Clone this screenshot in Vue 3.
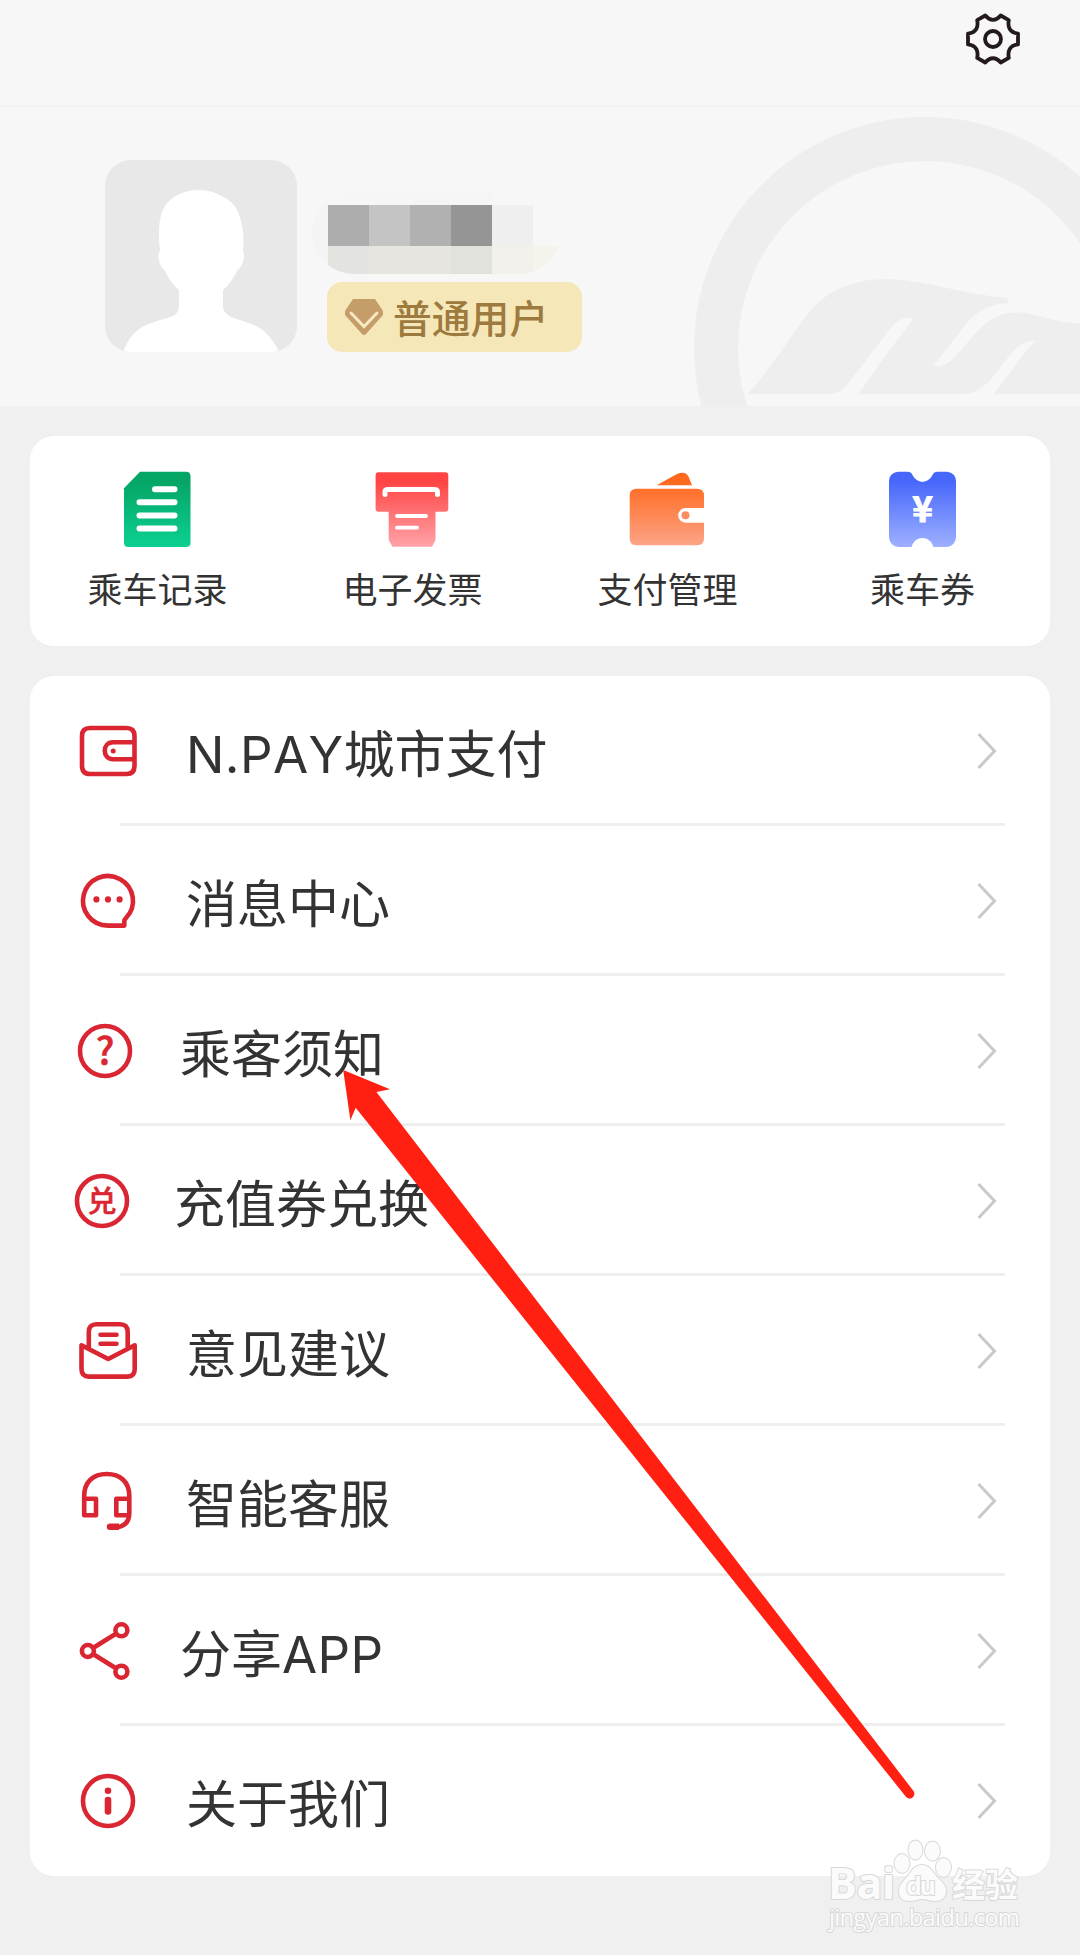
<template>
  <div class="page">
    <header class="topbar">
      <svg class="gear" viewBox="0 0 60 60">
        <path
          d="M22.3 6.5L14.2 11.2C15.5 18 13.5 23.5 5 24.6V35.4C13.5 36.5 15.5 42 14.2 48.8L22.3 53.5C27 47.8 33 47.8 37.7 53.5L45.8 48.8C44.5 42 46.5 36.5 55 35.4V24.6C46.5 23.5 44.5 18 45.8 11.2L37.7 6.5C33 12.2 27 12.2 22.3 6.5Z"
        />
        <circle cx="30" cy="30" r="8" />
      </svg>
    </header>

    <section class="profile">
      <svg class="emblem" viewBox="0 318 1440 900">
        <circle cx="975" cy="1044" r="627" />
        <path
          d="M445 1180C510 1110 570 1010 625 940C680 870 760 835 870 837C980 842 1080 880 1225 895V910C1165 912 1130 935 1100 970L1000 1098C1030 1105 1050 1085 1070 1065C1130 1000 1160 940 1250 937C1310 938 1350 968 1440 970V1183H1180L1240 1105C1265 1070 1285 1040 1310 1023C1270 1020 1250 1040 1230 1065C1190 1110 1160 1183 1080 1183H775L850 1075L940 957C900 945 880 975 860 1000L760 1130C735 1165 720 1183 670 1183H445Z"
        />
      </svg>
      <svg class="avatar" viewBox="0 0 192 192">
        <path
          d="M18 192C23 180 28 172 39 166C50 161 60 159 68 156C72 154 74 150 74 146V130C68 125 63 118 60 111C56 108 52 99 54 93L55 90C53 75 54 60 57 52C63 37 77 30 96 30C106 30 117 35 126 42C136 51 140 72 138 90C141 98 137 107 132 111C128 119 123 126 118 130V146C118 151 121 154 126 157C136 161 148 163 156 169C164 175 170 183 174 192Z"
        />
      </svg>
      <div class="user">
        <div class="mosaic">
          <i v-for="(color, i) in mosaic" :key="i" :style="{ background: color }"></i>
        </div>
        <div class="level">
          <svg class="gem" viewBox="0 0 40 38">
            <path d="M9 1H31L39 13V17L22 36Q20 38 18 36L1 17V13Z" fill="#c49d69" />
            <path
              d="M7 15L20 28.500L33 15"
              fill="none"
              stroke="#f8e9c2"
              stroke-width="3"
              stroke-linecap="round"
            />
          </svg>
          <span>普通用户</span>
        </div>
      </div>
    </section>

    <nav class="shortcuts">
      <a v-for="item in shortcuts" :key="item.name">
        <svg viewBox="0 0 80 80">
          <defs>
            <linearGradient :id="item.name" x1="0" y1="0" x2="0" y2="80" gradientUnits="userSpaceOnUse">
              <stop offset="0.15" :stop-color="item.from" />
              <stop offset="0.95" :stop-color="item.to" />
            </linearGradient>
          </defs>
          <g :fill="`url(#${item.name})`">
            <path :d="item.shape" />
          </g>
          <g v-if="item.name === 'record'" class="lines" stroke-width="6">
            <path d="M38 20.300H57.500M22.500 33.300H57.500M22.500 46.500H57.500M22.500 59.600H57.500" />
          </g>
          <g v-if="item.name === 'invoice'" class="lines" stroke-width="3.8">
            <path d="M13 25.500V23Q13 20.500 16 20.500H62Q65.500 20.500 65.500 23V25.500" stroke-width="5" />
            <path d="M25 47H54M25 58.700H45" />
          </g>
          <circle v-if="item.name === 'wallet'" cx="58.500" cy="46.300" r="4" fill="#fd8c60" />
          <text v-if="item.name === 'coupon'" class="yen" x="40.500" y="53">¥</text>
        </svg>
        <span>{{ item.label }}</span>
      </a>
    </nav>

    <ul class="menu">
      <li v-for="item in menu" :key="item.label">
        <div class="row">
          <svg class="icon" viewBox="0 0 60 60">
            <circle v-if="item.ring" :cx="item.ring" cy="30" r="25" />
            <path v-if="item.path" :d="item.path" />
            <circle
              v-for="(dot, i) in item.dots"
              :key="i"
              class="solid"
              :cx="dot[0]"
              :cy="dot[1]"
              :r="dot[2]"
            />
            <path v-if="item.solid" class="solid" :d="item.solid" />
            <text v-if="item.char" :x="item.ring" :y="item.charY" :font-size="item.charSize">
              {{ item.char }}
            </text>
          </svg>
          <span class="label" :class="item.shift">
            <b v-if="item.before">{{ item.before }}</b>{{ item.label }}<b v-if="item.after">{{ item.after }}</b>
          </span>
          <svg class="arrow" viewBox="0 0 22 40">
            <path d="M2.500 3L18.500 20L2.500 37" />
          </svg>
        </div>
      </li>
    </ul>

    <svg class="overlay" viewBox="0 0 1080 1955">
      <path
        fill="#ff2012"
        d="M343.200 1070L390 1089.300L376.400 1092L913.500 1791A4.500 4.500 0 0 1 905.700 1796.500L355.700 1107.700L350.400 1120.300Z"
      />
      <g class="watermark">
        <text x="828" y="1899" font-size="43" font-weight="700" textLength="67">Bai</text>
        <ellipse cx="902" cy="1863.500" rx="7.500" ry="9.500" />
        <ellipse cx="915.500" cy="1850" rx="7" ry="9.500" />
        <ellipse cx="932.500" cy="1851" rx="7.500" ry="9.500" />
        <ellipse cx="943.500" cy="1867.500" rx="7.500" ry="9.500" />
        <path
          d="M922 1865C930 1865 933 1872 937 1877C942 1882 946 1885 946 1891C946 1898 941 1901 935 1901C930 1901 927 1899 922 1899C917 1899 915 1901 910 1901C903 1901 899 1898 899 1891C899 1885 903 1882 907 1877C911 1872 914 1865 922 1865Z"
        />
        <text x="906" y="1895" font-size="25" font-weight="700" textLength="30">du</text>
        <text x="952" y="1897" font-size="33" font-weight="700" textLength="66">经验</text>
        <text x="829" y="1926" font-size="24" textLength="191">jingyan.baidu.com</text>
      </g>
    </svg>
  </div>
</template>

<script setup>
const mosaic = [
  "#f5f5f5", "#f6f6f6", "#f6f6f6", "#f5f5f5", "#f5f5f5", "#f7f7f7", "#f7f7f7",
  "#f4f4f4", "#adadad", "#c4c4c4", "#b1b1b1", "#959595", "#efefef", "#f7f7f7",
  "#f4f4f4", "#e3e3df", "#e6e5e0", "#e6e5e0", "#e2e2dd", "#f1f0ea", "#f4f3ec",
];

const shortcuts = [
  {
    name: "record",
    label: "乘车记录",
    from: "#05a565",
    to: "#0bcf90",
    shape: "M23 2.700H69Q73.500 2.700 73.500 7V73.500Q73.500 78 69 78H11.500Q7 78 7 73.500V19.300Z",
  },
  {
    name: "invoice",
    label: "电子发票",
    from: "#ff4443",
    to: "#ffa1a6",
    shape:
      "M6.500 3.300H73.300Q76.300 3.300 76.300 6.500V39.500Q76.300 42.700 73.300 42.700H63.500V71L60 77.700H20.500L16.700 71V42.700H6.500Q3.600 42.700 3.600 39.500V6.500Q3.600 3.300 6.500 3.300Z",
  },
  {
    name: "wallet",
    label: "支付管理",
    from: "#ff681d",
    to: "#fda386",
    shape:
      "M29.600 16.300L50 5Q58.500 1.500 61.500 7.500L65 16.300ZM9.500 19.700H70Q77 19.700 77 26.500V39H58.500A7.350 7.350 0 0 0 58.500 53.700H77V69.500Q77 76.300 70 76.300H9.500Q2.700 76.300 2.700 69.500V26.500Q2.700 19.700 9.500 19.700Z",
  },
  {
    name: "coupon",
    label: "乘车券",
    from: "#4767fb",
    to: "#9baeff",
    shape:
      "M16 2.700H25.500Q29 2.700 30.500 6C35 15 46 15 50.500 6Q52 2.700 55.500 2.700H65Q74 4 74 12.500V68.500Q73 77 65 78H51.500C48 66 33 66 29.500 78H16Q8 77 7 68.500V12.500Q7 4 16 2.700Z",
  },
];

const menu = [
  {
    before: "N.PAY",
    label: "城市支付",
    path: "M12 7H48.500Q56.500 7 56.500 15V45Q56.500 53 48.500 53H12Q4 53 4 45V15Q4 7 12 7ZM56.500 21.300H35C24 21.300 24 38.200 35 38.200H56.500",
    dots: [[35.2, 30, 2.5]],
  },
  {
    label: "消息中心",
    path: "M30 54.600H46.300V50.500Q46.300 48.500 48 47A25 24.800 0 1 0 30 54.600Z",
    dots: [[18.4, 28.4, 3.1], [30, 28.4, 3.1], [41.6, 28.4, 3.1]],
  },
  { label: "乘客须知", shift: "near", ring: 27, char: "?", charY: 44, charSize: 38 },
  { label: "充值券兑换", shift: "nearer", ring: 24, char: "兑", charY: 41, charSize: 29 },
  {
    label: "意见建议",
    path: "M10.800 26V11Q10.800 3.300 18.500 3.300H42Q49.700 3.300 49.700 11V26M3.500 24.300V48Q3.500 55.600 11 55.600H49.500Q56.700 55.600 56.700 48V24.300L30.200 38ZM22.500 13.700H38.500M22.500 22.700H38.500",
  },
  {
    label: "智能客服",
    path: "M6.200 44.300V25C6.200 11 15 3 28.700 3S51.300 11 51.300 25V42C51.300 51 46 55.500 38 56.500M6.200 27.700H18V44.300H6.200ZM51.300 27.700H38.300V44.300H51.300",
    solid: "M32 52.500H41V59H32A3.200 3.200 0 0 1 32 52.500Z",
  },
  {
    label: "分享",
    after: "APP",
    shift: "near",
    path: "M3.900 30a6 6 0 1 0 12 0a6 6 0 1 0-12 0M37.400 9.300a6 6 0 1 0 12 0a6 6 0 1 0-12 0M37.400 50.700a6 6 0 1 0 12 0a6 6 0 1 0-12 0M15 27L38.300 12.500M15 33L38.300 47.500",
  },
  {
    label: "关于我们",
    ring: 30,
    dots: [[30, 19.7, 3.3]],
    solid: "M26.700 29A3.300 3.300 0 0 1 33.300 29V40.500A3.300 3.300 0 0 1 26.700 40.500Z",
  },
];
</script>

<style>
body {
  margin: 0;
  background: #f0f0f0;
}
</style>

<style scoped>
.page {
  position: relative;
  width: 1080px;
  height: 1955px;
  overflow: hidden;
  background: #f0f0f0;
  color: #333;
  font-family: "Noto Sans CJK SC", sans-serif;
}
svg {
  display: block;
  flex: none;
}
.topbar {
  display: flex;
  justify-content: flex-end;
  box-sizing: border-box;
  height: 107px;
  padding: 9px 57px 0 0;
  background: #f7f7f7;
  border-bottom: 2px solid #f3f3f3;
}
.gear {
  width: 60px;
  height: 60px;
  fill: none;
  stroke: #231a1e;
  stroke-width: 3.8;
  stroke-linejoin: round;
}
.profile {
  position: relative;
  display: flex;
  box-sizing: border-box;
  height: 299px;
  padding: 53px 0 0 105px;
  background: #f7f7f7;
}
.emblem {
  position: absolute;
  right: 0;
  bottom: 0;
  width: 480px;
  height: 300px;
  fill: #eee;
}
.emblem circle {
  fill: none;
  stroke: #eee;
  stroke-width: 132;
}
.avatar {
  width: 192px;
  height: 192px;
  border-radius: 26px;
  background: #e8e8e8;
  fill: #fff;
}
.user {
  position: relative;
  display: flex;
  flex-direction: column;
  gap: 8px;
  margin: 31px 0 0 15px;
}
.mosaic {
  display: grid;
  grid-template: 14px 41px 28px / 16px repeat(5, 41px) 28px;
  width: 249px;
  border-radius: 42px;
  overflow: hidden;
}
.level {
  display: flex;
  align-items: center;
  gap: 9px;
  box-sizing: border-box;
  width: 255px;
  height: 70px;
  margin-left: 15px;
  padding-left: 17px;
  border-radius: 15px;
  background: #f6e7b9;
  color: #9d7a3e;
  font-size: 38.8px;
  font-weight: 500;
  line-height: 68px;
}
.level span {
  height: 70px;
}
.gem {
  width: 40px;
  height: 38px;
}
.shortcuts {
  display: flex;
  box-sizing: border-box;
  width: 1020px;
  height: 210px;
  margin: 30px 30px 0;
  padding-top: 33px;
  border-radius: 24px;
  background: #fff;
}
.shortcuts a {
  display: flex;
  flex: 1;
  flex-direction: column;
  align-items: center;
  gap: 14px;
  font-size: 35px;
  line-height: 50px;
}
.shortcuts svg {
  width: 80px;
  height: 80px;
  margin-right: 1px;
}
.lines {
  fill: none;
  stroke: #fff;
  stroke-linecap: round;
}
.yen {
  fill: #fff;
  stroke: #fff;
  stroke-width: 1;
  font-size: 35px;
  font-weight: 700;
  text-anchor: middle;
}
.menu {
  width: 1020px;
  height: 1200px;
  margin: 30px 30px 0;
  padding: 0;
  border-radius: 24px;
  background: #fff;
  list-style: none;
}
.menu li:not(:last-child)::after {
  content: "";
  display: block;
  height: 3px;
  margin: 0 45px 0 90px;
  background: #eee;
}
.row {
  display: flex;
  align-items: center;
  box-sizing: border-box;
  height: 147px;
  padding: 3px 52px 0 48px;
}
.icon {
  width: 60px;
  height: 60px;
  overflow: visible;
  fill: none;
  stroke: #d92632;
  stroke-width: 4.6;
  stroke-linecap: round;
  stroke-linejoin: round;
}
.icon .solid {
  fill: #d92632;
  stroke: none;
}
.icon text {
  fill: #d92632;
  stroke-width: 0.6;
  font-weight: 500;
  text-anchor: middle;
}
.label {
  flex: 1;
  margin-left: 48px;
  font-size: 51px;
  line-height: 70px;
}
.label b {
  font-family: Inter, sans-serif;
  font-weight: 400;
  font-kerning: none;
  letter-spacing: 0.4px;
  line-height: 1;
}
.label.near {
  margin-left: 42px;
}
.label.nearer {
  margin-left: 36px;
}
.arrow {
  width: 22px;
  height: 40px;
  fill: none;
  stroke: #c9c9c9;
  stroke-width: 3;
}
.overlay {
  position: absolute;
  top: 0;
  left: 0;
  width: 1080px;
  height: 1955px;
}
.watermark {
  fill: #fbfbfb;
  stroke: #d8d8d8;
  stroke-width: 2;
  paint-order: stroke;
  font-family: "Open Sans", "Noto Sans CJK SC", sans-serif;
}
</style>
